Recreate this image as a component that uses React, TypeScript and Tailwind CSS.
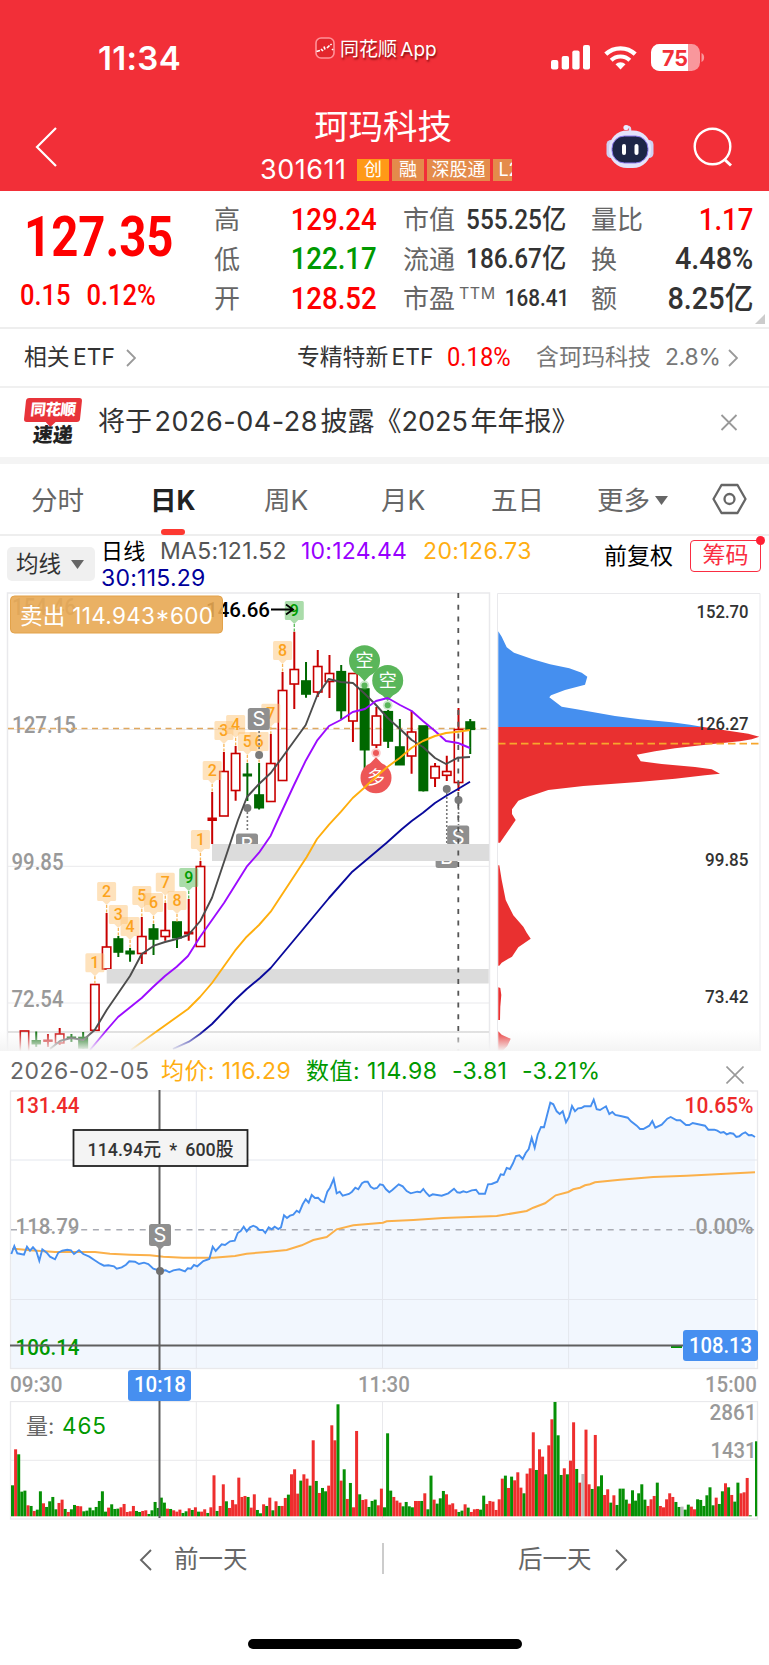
import { ReactNode } from "react";

const INTER = "font-['Inter','Noto_Sans_CJK_SC',sans-serif]";
const DIN = "font-['Roboto','Noto_Sans_CJK_SC',sans-serif] font-medium whitespace-nowrap";
const GREEN = "#009900";
const GRID = "#e9e9ec";

// series are stored at 3x, this brings them back to page pixels
function pts(list: string, ox: number, oy: number) {
    return list.trim().split(/\s+/).map((p) => {
        const [x, y] = p.split(",").map(Number);
        return (x / 3 + ox).toFixed(1) + "," + (y / 3 + oy).toFixed(1);
    }).join(" ");
}

// text in the charts: y is the baseline, w the final width
function Label(props: { x: number; y: number; w: number; size: number; fill: string; children: string; weight?: number; gap?: number }) {
    return (
        <text x={props.x} y={props.y} fontSize={props.size} fill={props.fill} fontWeight={props.weight ?? 500} wordSpacing={props.gap ?? 0}
            textLength={props.w} lengthAdjust="spacingAndGlyphs" fontFamily="Roboto, 'Noto Sans CJK SC', sans-serif">
            {props.children}
        </text>
    );
}

function StatusBar() {
    return (
        <div className="flex h-[106px] text-white">
            <div className="ml-[98px] mt-[38px] h-10 w-[217px] text-[33px] font-semibold leading-[41px] tracking-[0.300px]">11:34</div>
            <div className="flex h-6 w-[236px] pt-[37px]">
                <svg className="h-[22px] w-[20px] shrink-0" viewBox="0 0 20 22">
                    <rect x="1" y="1" width="18" height="20" rx="5" fill="#e3262d" stroke="#ff9298" strokeWidth="1.6" />
                    <path d="M1.500 14.500l3.500-1M6 12l2 2M9 9.500l1 3M12 11l2.500-2.500M15.500 7l1 1M17 12l1 1" stroke="#fff" strokeWidth="1.700" />
                </svg>
                <div className="ml-[5px] h-6 whitespace-nowrap text-[19px] leading-[25px] [word-spacing:-2px] [text-shadow:1px_2px_2px_rgba(90,0,0,0.7)]">同花顺 App</div>
            </div>
            <svg className="mt-[44px] h-7 w-[154px]" viewBox="551 44 154 28" fill="#fff">
                <rect x="551" y="60" width="7.3" height="9.5" rx="2" />
                <rect x="561.7" y="56" width="7.3" height="13.5" rx="2" />
                <rect x="572.3" y="50.5" width="7.3" height="19" rx="2" />
                <rect x="583" y="45" width="7" height="24.5" rx="2" />
                <path d="M620.5 69.5l-5-5.2a7.4 7.4 0 0 1 10 0z" />
                <path d="M611.2 60.2a13.5 13.5 0 0 1 18.6 0" fill="none" stroke="#fff" strokeWidth="4.2" />
                <path d="M605.8 54.2a21.4 21.4 0 0 1 29.4 0" fill="none" stroke="#fff" strokeWidth="4.4" />
                <rect x="651" y="44" width="49" height="27" rx="8.5" opacity="0.5" />
                <path d="M659.500 44H688v27h-28.500a8.500 8.500 0 0 1-8.500-8.500v-10a8.500 8.500 0 0 1 8.500-8.500z" />
                <path d="M701.500 53c3.500 1.500 3.500 7.500 0 9z" opacity="0.5" />
                <text x="662" y="65.500" fontSize="21.500" fontWeight="700" fill="#f22f38" textLength="26" lengthAdjust="spacingAndGlyphs">75</text>
            </svg>
        </div>
    );
}

function Tag(props: { text: string; cls: string }) {
    return <div className={"h-[22px] shrink-0 overflow-hidden whitespace-nowrap text-center text-[18px] leading-[21px] text-white " + props.cls}>{props.text}</div>;
}

function TitleBar() {
    return (
        <div className="flex h-[85px] text-white">
            <svg className="ml-[35px] mt-[21px] h-10 w-[22px]" viewBox="0 0 22 40" fill="none" stroke="#fff" strokeWidth="2.200">
                <path d="M21 1L2 20l19 19" />
            </svg>
            <div className="ml-[203px] w-[346px]">
                <div className="ml-[54px] h-[48px] text-[34.5px] leading-[42px]">珂玛科技</div>
                <div className="flex h-[32px] w-[252px] items-center gap-[3px] overflow-hidden">
                    <div className="w-[94px] shrink-0 text-[27px] leading-8 tracking-[0.500px]">301611</div>
                    <Tag text="创" cls="w-8 bg-[#ff9a17]" />
                    <Tag text="融" cls="w-8 bg-[#e48b4b]" />
                    <Tag text="深股通" cls="w-[63px] bg-[#e48b4b]" />
                    <Tag text="L2" cls="w-[32px] bg-[#e48b4b]" />
                </div>
            </div>
            <svg className="mt-[18px] h-[46px] w-[48px]" viewBox="606 124 48 46">
                <path d="M630 133v-4q0-3-4-2" stroke="#d9dcf5" strokeWidth="2.500" fill="none" />
                <circle cx="626" cy="127.500" r="2.600" fill="#e9ecff" />
                <rect x="606.500" y="140" width="9" height="18" rx="4.500" fill="#cfd0f2" />
                <rect x="644.500" y="140" width="9" height="18" rx="4.500" fill="#cfd0f2" />
                <rect x="609" y="130.500" width="42" height="37.500" rx="18" fill="#e4e4fb" />
                <rect x="612" y="136" width="36" height="27" rx="12.500" fill="#1d2546" stroke="#8f7cf0" strokeWidth="1" />
                <rect x="622" y="144" width="4" height="11" rx="2" fill="#fff" />
                <rect x="634.500" y="144" width="4" height="11" rx="2" fill="#fff" />
            </svg>
            <svg className="ml-[39px] mt-[21px] h-10 w-[42px]" viewBox="0 0 42 40" fill="none" stroke="#fff" strokeWidth="2.400">
                <circle cx="19.500" cy="19.500" r="17.800" />
                <path d="M31 32l7 6.500" strokeWidth="3" />
            </svg>
        </div>
    );
}

function QuoteCell(props: { name: ReactNode; value: string; cls: string }) {
    return (
        <div className="flex h-[39.500px] items-center justify-between">
            <span className="whitespace-nowrap text-[26px] text-[#666]">{props.name}</span>
            <span className={DIN + " origin-right " + props.cls}>{props.value}</span>
        </div>
    );
}

function Quote() {
    const big = "text-[31px] ";
    return (
        <div className="relative flex h-[138px] border-b-2 border-[#eee] pt-[9px]">
            <div className="w-[214px] text-[#fe0000]">
                <div className={DIN + " ml-6 mt-[4px] h-[64px] origin-left scale-x-[0.845] !font-bold text-[56px] leading-[66px]"}>127.35</div>
                <div className={DIN + " ml-5 mt-[7px] flex origin-left scale-x-[0.880] gap-[18px] text-[29px] leading-10"}><span>0.15</span><span>0.12%</span></div>
            </div>
            <div className="w-[163px]">
                <QuoteCell name="高" value="129.24" cls={big + "scale-x-[0.890] text-[#fe0000]"} />
                <QuoteCell name="低" value="122.17" cls={big + "scale-x-[0.890] text-[#009900]"} />
                <QuoteCell name="开" value="128.52" cls={big + "scale-x-[0.890] text-[#fe0000]"} />
            </div>
            <div className="ml-[26px] w-[162px]">
                <QuoteCell name="市值" value="555.25亿" cls="text-[27px] scale-x-[0.900] text-[#333]" />
                <QuoteCell name="流通" value="186.67亿" cls="text-[27px] scale-x-[0.900] text-[#333]" />
                <QuoteCell name={<>市盈<sup className="top-[-9px] ml-1 text-[16px] tracking-[0.500px]">TTM</sup></>} value="168.41" cls="text-[23.500px] scale-x-[0.880] text-[#333]" />
            </div>
            <div className="ml-[26px] w-[162px]">
                <QuoteCell name="量比" value="1.17" cls={big + "scale-x-[0.890] text-[#fe0000]"} />
                <QuoteCell name="换" value="4.48%" cls={big + "scale-x-[0.930] text-[#333]"} />
                <QuoteCell name="额" value="8.25亿" cls={big + "scale-x-[0.930] text-[#333]"} />
            </div>
            <svg className="absolute bottom-[3px] right-[4px] h-[10px] w-[10px]" viewBox="0 0 10 10"><path d="M10 0v10H0z" fill="#ccc" /></svg>
        </div>
    );
}

function Chevron(props: { cls: string }) {
    return <svg className={"h-[18px] w-[10px] shrink-0 " + props.cls} viewBox="0 0 10 18" fill="none" stroke="#999" strokeWidth="1.800"><path d="M1 1l8 8-8 8" /></svg>;
}

function EtfRow() {
    return (
        <div className="flex h-[59px] items-center whitespace-nowrap border-b-2 border-[#f0f0f0] text-[22.800px] text-[#333] [word-spacing:-3px]">
            <span className="ml-6 w-[102px]">相关 ETF</span>
            <Chevron cls="" />
            <span className="ml-[161px] w-[150px]">专精特新 ETF</span>
            <span className={DIN + " w-[89px] origin-left scale-x-[0.950] text-[25px] text-[#fe0000] !font-normal"}>0.18%</span>
            <span className="w-[129px] text-[23px] text-[#777]">含珂玛科技</span>
            <span className="w-[63px] tracking-[-0.200px] text-[#777]">2.8%</span>
            <Chevron cls="" />
        </div>
    );
}

function Notice() {
    return (
        <div className="flex h-[76px] border-b-[7px] border-[#f4f4f4]">
            <div className="ml-[23px] mt-[10px] w-[60px]">
                <div className="relative ml-[2px] h-[24px] w-[56px] -skew-x-6 rounded-[3px] bg-[#e8343a] text-center">
                    <span className="block whitespace-nowrap text-[15.500px] font-black leading-[23px] tracking-[-0.500px] text-white">同花顺</span>
                    <svg className="absolute left-[22px] top-6 h-[5px] w-[10px]" viewBox="0 0 10 5"><path d="M0 0h10L5 5z" fill="#e8343a" /></svg>
                </div>
                <div className="-skew-x-6 text-center text-[20px] font-black leading-[27px] text-[#222]">速递</div>
            </div>
            <div className="ml-[15px] w-[622px] whitespace-nowrap pt-[14px] text-[27px] leading-10 text-[#333] [word-spacing:-5px]">
                将于 <span className="tracking-[0.500px]">2026-04-28</span> 披露《2025 年年报》
            </div>
            <svg className="mt-[26px] h-[17px] w-[18px]" viewBox="0 0 18 17" stroke="#999" strokeWidth="1.800"><path d="M1.500 1l15 15M16.500 1l-15 15" /></svg>
        </div>
    );
}

function Tabs() {
    const tab = "h-[72px] shrink-0 whitespace-nowrap leading-[73px] ";
    return (
        <div className="relative flex h-[72px] border-b-2 border-[#eee] pl-[31px] text-[26.500px] text-[#666]">
            <div className={tab + "w-[119px]"}>分时</div>
            <div className={tab + "w-[114px] font-bold text-[#222]"}>日K</div>
            <div className={tab + "w-[117px]"}>周K</div>
            <div className={tab + "w-[110px]"}>月K</div>
            <div className={tab + "w-[106px]"}>五日</div>
            <div className={tab + "w-[58px]"}>更多</div>
            <svg className="mt-8 h-[9px] w-[13px]" viewBox="0 0 13 9"><path d="M0 0h13L6.500 9z" fill="#666" /></svg>
            <svg className="ml-[44px] mt-[19px] h-[32px] w-[35px]" viewBox="0 0 35 32" fill="none" stroke="#666" strokeWidth="2.300">
                <path d="M9.500 2h16L33.500 16l-8 14h-16L1.500 16z" strokeLinejoin="round" />
                <circle cx="17.500" cy="16" r="5" />
            </svg>
            <div className="absolute bottom-[-1px] left-[161px] h-[6px] w-[24px] rounded-[3px] bg-[#fd3931]"></div>
        </div>
    );
}

function MaRow() {
    return (
        <div className="flex h-[56px]">
            <div className="ml-[7px] mt-[11px] flex h-[34px] w-[88px] items-center rounded-[5px] bg-[#f0f0f0] pl-[9px]">
                <span className="w-[55px] text-[22.500px] text-[#333]">均线</span>
                <svg className="h-[9px] w-[13px]" viewBox="0 0 13 9"><path d="M0 0h13L6.500 9z" fill="#666" /></svg>
            </div>
            <div className="ml-[6px] w-[500px] whitespace-nowrap pt-[1px] text-[23px] leading-[28px] tracking-[0.250px]">
                <div className="flex h-[27px]">
                    <span className="w-[59px] text-[22px] text-black">日线</span>
                    <span className="w-[141px] text-[#555]">MA5:121.52</span>
                    <span className="w-[122px] text-[#9800ff]">10:124.44</span>
                    <span className="tracking-[0.400px] text-[#ffae12]">20:126.73</span>
                </div>
                <div className="text-[#00009b]">30:115.29</div>
            </div>
            <div className="ml-[3px] mt-[3px] w-[86px] whitespace-nowrap text-[23px] leading-[34px] text-black">前复权</div>
            <div className="relative mt-[4px] h-[32px] w-[71px] rounded-[4px] border-[1.500px] border-[#fa2d42] text-center text-[23px] leading-[29px] text-[#fa2d42]">
                筹码
                <i className="absolute right-[-5px] top-[-5px] h-[9px] w-[9px] rounded-full bg-[#ff1f33]"></i>
            </div>
        </div>
    );
}

// r = up, g = down; body top, body bottom, high, low
const candles: [string, number, number, number, number][] = [
    ["r", 1031, 1056, 1031, 1056], ["g", 1040.5, 1044, 1031.5, 1047], ["r", 1040, 1041.5, 1034, 1047], ["r", 1034, 1043, 1028, 1045],
    ["g", 1037, 1038.5, 1034, 1042], ["g", 1037.5, 1048, 1032, 1049], ["r", 984.5, 1030.3, 984.5, 1030.3], ["r", 947, 969, 913, 969],
    ["g", 939, 952, 936, 957], ["g", 951, 954, 948, 961.7], ["r", 936.5, 953.5, 917, 964], ["g", 929, 939, 924, 955],
    ["r", 930.5, 936.5, 903, 940.7], ["g", 922, 937.7, 922, 948], ["r", 932, 934, 899, 940.7], ["r", 866.5, 946.5, 861, 946.5],
    ["r", 818, 820.5, 792, 844], ["r", 771.5, 816, 752, 816], ["r", 753.5, 790.5, 746, 800.7], ["g", 774, 776, 763, 801],
    ["g", 795, 807.7, 763, 809.5], ["r", 763.5, 801.5, 734, 801.5], ["r", 690.5, 780.5, 672, 780.5], ["r", 669.5, 684, 631.7, 709],
    ["g", 681, 694, 662, 697.7], ["r", 666.5, 692, 650, 697], ["r", 673.5, 681.5, 655, 698], ["g", 671.7, 710.5, 665, 719],
    ["r", 673.5, 721, 673, 742], ["g", 689, 749.7, 689, 770], ["r", 716, 745, 707, 748], ["g", 711.7, 741, 710, 748],
    ["g", 747, 764.7, 719, 765], ["r", 732, 756, 710.7, 773.7], ["g", 726, 790.5, 726, 791.5], ["r", 766.5, 778, 763, 787],
    ["r", 771.5, 775.3, 755.7, 781], ["r", 729.5, 782.5, 708, 791], ["g", 722, 729.3, 719, 754],
];
const cx = (i: number) => 24.5 + i * 11.73;

// candle index, flag top, number
const flags: [number, number, number][] = [
    [6, 953.3, 1], [7, 882, 2], [8, 905, 3], [9, 917, 4], [10, 886, 5], [11, 893, 6], [12, 872.7, 7], [13, 891, 8], [14, 868, 9],
    [15, 830, 1], [16, 761, 2], [17, 721, 3], [18, 715, 4], [19, 732, 5], [20, 732, 6], [21, 703.7, 7], [22, 641, 8], [23, 601, 9],
];

function Marker(props: { x: number; y: number; t: string }) {
    const { x, y, t } = props;
    return (
        <g>
            <rect x={x - 11} y={y} width="22" height="22" rx="2.500" fill="#8f8f8f" />
            <text x={x} y={y + 18} fontSize="20" fill="#fff" textAnchor="middle">{t}</text>
        </g>
    );
}

function Bubble(props: { x: number; y: number; t: string; c: string; up?: boolean }) {
    const { x, y, t, c } = props;
    const d = props.up ? -1 : 1;
    return (
        <g fill={c}>
            <circle cx={x} cy={y} r="15.500" />
            <path d={`M${x - 8} ${y + 12 * d}L${x} ${y + 20.500 * d}L${x + 8} ${y + 12 * d}z`} />
            <circle cx={x} cy={y + 24.700 * d} r="4.800" opacity="0.3" />
            <circle cx={x} cy={y + 24.700 * d} r="3" />
            <text x={x} y={y + 6.500} fontSize="18" fill="#fff" textAnchor="middle">{t}</text>
        </g>
    );
}

function Stem(props: { i: number; y1: number; y2: number; dot: number }) {
    return (
        <g>
            <line x1={cx(props.i)} x2={cx(props.i)} y1={props.y1} y2={props.y2} stroke="#777" strokeWidth="1.600" strokeDasharray="2 2" />
            <circle cx={cx(props.i)} cy={props.dot} r="4" fill="#7a7a7a" />
        </g>
    );
}

function KLine() {
    return (
        <svg className="block h-[459px] w-full" viewBox="0 592 769 459" fontFamily="Inter, 'Noto Sans CJK SC', sans-serif">
            <defs>
                <linearGradient id="fade" x1="0" y1="0" x2="0" y2="1">
                    <stop offset="0" stopColor="#f6f6f6" stopOpacity="0" />
                    <stop offset="1" stopColor="#f4f4f4" stopOpacity="1" />
                </linearGradient>
            </defs>
            <g fill="none" stroke={GRID} strokeWidth="1.500">
                <path d="M7.500 1051V593H489.500V1051" />
                <path d="M8 729.500H489M8 866.300H489M8 1003H489" strokeWidth="1" />
                <path d="M8 1032H489" stroke="#d4d4d4" />
                <path d="M497.500 1051V593.500H760V1051" strokeWidth="1" />
            </g>
            <Label x={12} y={615} w={64} size={23} fill="#999">154.46</Label>
            <Label x={12} y={733} w={64} size={23} fill="#999">127.15</Label>
            <Label x={11.5} y={869.5} w={52} size={23} fill="#999">99.85</Label>
            <Label x={11.5} y={1006.5} w={52} size={23} fill="#999">72.54</Label>
            <path d="M8 728.500H489" stroke="#dfa860" strokeWidth="1.300" strokeDasharray="6 4.500" />
            <Label x={206} y={617} w={64} size={20.5} fill="#000">146.66</Label>

            {candles.map(([c, t, b, h, l], i) => {
                const col = c === "r" ? "#c80000" : "#006800";
                const x = cx(i);
                const hollow = c === "r" && b - t > 3;
                return (
                    <g key={i} stroke={col} strokeWidth="2">
                        <path d={`M${x} ${h}V${t}M${x} ${b}V${l}`} />
                        <rect x={x - 4.2} y={t} width="8.400" height={b - t} fill={hollow ? "none" : col} strokeWidth={b - t < 4 && !hollow ? 1 : 1.6} />
                    </g>
                );
            })}

            {flags.map(([i, y, n], k) => {
                const x = cx(i);
                const g = n === 9;
                return (
                    <g key={k}>
                        <path d={`M${x - 8} ${y}h16a1.500 1.500 0 0 1 1.500 1.500v16a1.500 1.500 0 0 1-1.500 1.500h-4l-4 4-4-4h-4a1.500 1.500 0 0 1-1.500-1.500v-16a1.500 1.500 0 0 1 1.500-1.500z`} fill={g ? "#56b95680" : "#fec57a80"} />
                        <line x1={x} x2={x} y1={y + 23} y2={candles[i][3]} stroke={g ? "#56b956" : "#f7b557"} strokeWidth="1.300" strokeDasharray="3 1.500" />
                        <text x={x} y={y + 15} fontSize="16" fontWeight="500" fontFamily="Roboto" textAnchor="middle" fill={g ? "#009c00" : "#fca31c"}>{n}</text>
                    </g>
                );
            })}
            <path d="M271 609.500H293M286 604.500L293 609.500L286 614.500" stroke="#000" strokeWidth="1.800" fill="none" />

            <Marker x={258.8} y={708} t="S" />
            <Stem i={20} y1={731} y2={755} dot={755} />
            <Marker x={247} y={833.5} t="B" />
            <Stem i={19} y1={808} y2={832} dot={808} />
            <Stem i={36} y1={789} y2={845} dot={789} />
            <Marker x={446.6} y={846} t="B" />
            <Stem i={37} y1={800} y2={825} dot={800} />
            <Marker x={458.2} y={825.5} t="S" />
            <rect x="212" y="844" width="277" height="17" fill="#dcdcdc" />
            <rect x="106.700" y="969" width="382" height="14.500" fill="#dcdcdc" />

            <Bubble x={364.5} y={660.7} t="空" c="#5ab65a" />
            <Bubble x={387.7} y={680.5} t="空" c="#5ab65a" />
            <Bubble x={376} y={777.7} t="多" c="#ed5757" up />

            <g fill="none" strokeWidth="1.900" strokeLinejoin="round">
                <polyline stroke="#4c4c4c" points="50,1049 60,1041 71,1038 83.3,1040 94.7,1030 106.7,1010 130,976 141.7,954 154,945.7 165,942 176.7,939 188.3,935 200.3,921 212,897.7 224,862 238,820 247,797 259,784 270.7,773 282,757.7 305.7,725 317,696 328.7,679 340.7,682 353,683 365,694 376,705 387.7,718 400,729 411.7,740 423,747 435,758 446,764 458,757.7 470,757" />
                <polyline stroke="#9c0bff" points="90,1050 106.7,1030 118,1017 141.7,998 153,987 165,976 176.7,966.7 188,956 200,937 224,903 246.7,866.7 259,852.7 270.7,835.7 278.7,818 294,785 305.7,760.7 317,740.7 329,726 340.7,720 352.7,712 365,709 376,701 387.7,698 400,705 411.7,711 423,721 435,731 446,741 458,743 470,748" />
                <polyline stroke="#ffae0d" points="131,1050 153,1034 188,1009 200,997 212,983 235,950.7 246.7,936.7 259,925 270.7,911.7 306.7,857 317,839 329,824.7 341,811.7 352.7,798 364,788 376,776.7 387.7,766.7 400,757.7 411.7,747.7 423,741 435,736 446,733 458,731.7 470,730" />
                <polyline stroke="#0a0a9c" points="173,1049 189,1041.7 200,1034 212,1024 235,1000 246.7,989 260,978 270.7,968 305.7,926 329,898 352.3,871.7 386.7,842.7 402,829 411.7,821 423,812.7 435,803 446,796 458,789 470,781.7" />
            </g>
            <path d="M458.300 593V1051" stroke="#555" strokeWidth="1.800" strokeDasharray="5 6.700" />

            <rect x="10.500" y="596" width="212" height="37" rx="4" fill="#e8a953" fillOpacity="0.9" stroke="#e3a24a" />
            <text x="20" y="623.500" fontSize="22.500" fill="#fff" textLength="193">卖出 114.943*600</text>

            <polygon fill="#458fef" points={pts("25,124 35,140 50,172 72,188 128,208 180,223 238,235 275,248 292,260 285,284 225,300 183,316 178,322 215,350 260,358 375,378 450,388 545,397 600,404 640,411 25,411", 490, 590)} />
            <g fill="#e93030">
                <polygon points={pts("25,411 640,411 715,422 775,431 808,440 785,448 750,454 660,463 555,475 495,484 440,494 452,514 515,522 615,531 665,538 690,551 645,556 555,566 445,576 280,588 175,600 115,620 85,632 66,658 66,672 77,690 30,758 25,758", 490, 590)} />
                <polygon points={pts("25,826 28,826 35,870 47,930 70,976 100,1010 110,1028 122,1046 85,1072 66,1100 35,1118 28,1127 25,1127", 490, 590)} />
                <polygon points={pts("25,1192 31,1194 34,1215 31,1250 30,1290 25,1290", 490, 590)} />
                <polygon points={pts("25,1324 35,1334 62,1346 52,1368 38,1382 25,1382", 490, 590)} />
            </g>
            <path d="M498 743.700H759" stroke="#f7a62c" strokeWidth="1.800" strokeDasharray="7.500 4" />
            <Label x={696.5} y={618} w={52} size={18.5} fill="#333">152.70</Label>
            <Label x={696.5} y={729.5} w={52} size={18.5} fill="#333">126.27</Label>
            <Label x={705} y={866} w={43.5} size={18.5} fill="#333">99.85</Label>
            <Label x={705} y={1003} w={43.5} size={18.5} fill="#333">73.42</Label>
            <rect x="0" y="1030" width="760" height="21" fill="url(#fade)" />
        </svg>
    );
}

const priceLeft = "34,612 43,588 52,610 72,614 81,590 90,602 99,592 109,603 118,632 127,598 140,608 150,620 165,628 175,608 187,602 202,599 213,601 222,612 237,601 250,612 268,620 283,630 300,641 312,647 325,646 342,649 350,656 365,652 378,644 388,634 405,635 417,642 432,638 445,642 460,656 479,662 497,661 508,667 520,661 538,658 555,664 563,655 573,656 582,645 592,649 610,633 628,627 638,590 647,603 665,583 675,585 690,574 704,572 713,549 722,543 731,530 740,544 750,532 760,527 770,532 778,540 788,540 796,549 806,532 815,538 824,530 835,537 843,532 852,496 861,504 870,497 880,494 890,482 898,487 908,463 917,448 926,458 935,435 945,444 954,443 963,453 972,457 982,425 990,413 1001,387 1010,430 1019,425 1028,437 1047,432 1056,425 1066,413 1075,418 1086,400 1094,395 1103,395 1112,410 1122,416 1131,414";
const priceRight = "0,403 9,405 18,418 28,427 37,420 56,403 68,409 80,423 92,430 112,425 121,427 130,417 139,429 148,438 158,433 185,437 205,430 222,416 232,427 240,428 250,424 260,427 275,421 288,419 297,431 315,431 324,403 335,402 352,395 362,373 371,375 380,354 390,357 399,340 408,318 418,316 428,327 437,309 446,297 455,263 464,293 473,254 483,231 492,232 502,193 511,158 520,163 530,184 539,192 548,184 558,217 567,201 576,168 585,184 594,175 604,174 613,169 632,169 641,149 650,178 660,180 678,169 688,192 697,186 706,195 725,199 743,203 753,214 770,227 780,237 790,237 808,227 817,213 826,233 845,224 862,206 872,201 890,211 901,211 918,225 928,225 938,219 975,227 985,239 1003,239 1012,242 1022,248 1031,246 1040,253 1050,249 1060,251 1069,261 1078,259 1087,251 1096,247 1106,256 1115,255 1125,261";
const avgLeft = "36,597 50,597 90,601 165,606 285,606 330,611 390,614 450,616 490,620 550,623 640,623 705,618 740,611 800,606 860,600 905,586 940,570 980,561 1010,538 1060,526 1140,519";
const avgRight = "9,518 20,514 100,510 190,504 350,498 440,483 460,473 495,460 527,436 565,426 580,418 600,413 615,406 630,403 645,397 720,389 820,381 920,377 1125,367";

function Intraday() {
    const price = pts(priceLeft, 0, 1050) + " " + pts(priceRight, 380, 1050);
    const avg = pts(avgLeft, 0, 1050) + " " + pts(avgRight, 380, 1050);
    return (
        <svg className="block h-[280px] w-full" viewBox="0 1090 769 280" fontFamily="Inter, 'Noto Sans CJK SC', sans-serif">
            <polygon points={"11,1368 " + price + " 755,1368"} fill="#f2f7fe" />
            <g fill="none" stroke={GRID} strokeWidth="1.300">
                <rect x="10.500" y="1091" width="747" height="277.500" />
                <path d="M196.300 1091V1368M382.500 1091V1368M568.600 1091V1368M11 1160H757M11 1299.500H757" stroke="#e4e7ee" strokeWidth="1" />
            </g>
            <path d="M11 1229.700H755" stroke="#a9abb3" strokeWidth="1.500" strokeDasharray="6 5.700" />
            <polyline points={avg} fill="none" stroke="#fbb04a" strokeWidth="2" />
            <polyline points={price} fill="none" stroke="#468ff0" strokeWidth="1.900" />
            <Label x={15.5} y={1113} w={64} size={22.5} fill="#ee2a2a">131.44</Label>
            <Label x={15.5} y={1234} w={64} size={22.5} fill="#999">118.79</Label>
            <Label x={15.5} y={1354.5} w={64} size={22.5} fill={GREEN}>106.14</Label>
            <Label x={684.5} y={1113} w={69} size={22.5} fill="#ee2a2a">10.65%</Label>
            <Label x={695.5} y={1234} w={58} size={22.5} fill="#999">0.00%</Label>
            <path d="M671 1347H682" stroke={GREEN} strokeWidth="2" />
            <path d="M10 1345.500H684M159.500 1090V1370" stroke="#5f5f5f" strokeWidth="2" fill="none" />
            <Marker x={160} y={1224} t="S" />
            <path d="M155 1245h10l-5 5z" fill="#8f8f8f" />
            <circle cx="160" cy="1271" r="4" fill="#707070" />
            <rect x="73.500" y="1130" width="174" height="36" fill="#f4f4f4" stroke="#222" strokeWidth="1.800" />
            <Label x={87.5} y={1155.5} w={146} size={19} fill="#333" gap={4}>114.94元 * 600股</Label>
            <rect x="683" y="1330" width="75" height="31" rx="3" fill="#468ff0" />
            <Label x={689} y={1353} w={63} size={22} fill="#fff">108.13</Label>
        </svg>
    );
}

function TimeAxis() {
    return (
        <div className={DIN + " relative flex h-[31px] justify-between pl-[10px] pr-[12px] text-[22px] leading-[30px] text-[#999]"}>
            <span className="origin-left scale-x-[0.940]">09:30</span>
            <span className="scale-x-[0.930]">11:30</span>
            <span className="origin-right scale-x-[0.930]">15:00</span>
            <div className="absolute left-[128px] top-0 h-[31px] w-[63px] rounded-[3px] bg-[#468ff0] text-center text-white"><span className="inline-block scale-x-[0.930]">10:18</span></div>
        </div>
    );
}

// one entry a minute: colour and bar top, at 3x
const volume = "g316 r208 g223 g335 g332 r376 g378 r393 g389 g334 r370 g381 g364 g351 g388 r369 r359 g387 r396 g388 g375 r378 r379 g394 g392 g383 g391 g381 g363 g334 g395 r383 g373 g387 g386 r382 r372 r396 r394 r378 g393 g396 r393 r391 g402 g391 g366 g384 g353 g368 r386 g387 r391 r395 r389 g399 g394 r385 g390 r382 g395 r395 r388 g399 r382 r286 g393 r378 r313 g364 r384 r360 r373 r293 r351 r348 g351 r383 r343 g390 g400 r373 g378 r353 g391 r364 g378 r378 r354 g344 r283 r268 r341 g302 r283 r296 g317 r181 g303 r339 g324 g334 r317 r136 r181 g73 r302 g268 r357 g309 r382 r153 g343 r360 r358 g381 g363 g359 r376 r326 g382 g160 g332 r351 r362 r368 g379 g366 g379 g382 r363 r363 g363 r340 g388 g287 r359 g371 g355 g333 r343 r374 r370 r388 g396 g392 r373 g383 r396 r388 r387 g389 g347 r372 r363 r365 r390 r358 r296 g287 r324 g290 r301 r277 r323 g340 r281 r265 r157 g270 r208 r230 g283 r196 r118 g66 g166 g285 r265 g283 r242 r127 g267 r308 n282 r149 r313 g327 r165 g319 g286 r345 r328 g368 r346 g375 g326 g326 g359 r371 g331 g362 g340 g313 g359 r378 r358 r348 g308 r378 r382 r358 r340 r351 g366 g381 n380 g389 g374 r380 r388 g358 g360 g378 g346 g322 g376 r353 g372 g334 r310 g322 r345 g365 g308 r340 r337 r294 g406 g409 g184".split(" ");
const volumeColor: Record<string, string> = { r: "#ee2e2e", g: "#069006", n: "#b9b9b9" };

function Volume() {
    return (
        <svg className="block h-[119px] w-full" viewBox="0 1401 769 119" fontFamily="Inter, 'Noto Sans CJK SC', sans-serif">
            <g fill="none" stroke={GRID} strokeWidth="1.300">
                <rect x="10.500" y="1401.500" width="747" height="117.500" />
                <path d="M196.300 1401V1519M382.500 1401V1519M568.600 1401V1519M11 1460.300H757" strokeWidth="1" />
            </g>
            <Label x={709.5} y={1420} w={47} size={22} fill="#999">2861</Label>
            <Label x={710.5} y={1458} w={46} size={22} fill="#999">1431</Label>
            {volume.map((v, i) => {
                const h = (409 - Number(v.slice(1))) / 3;
                return <rect key={i} x={11 + i * 3.1} y={1516.3 - h} width={i === 240 ? 2.2 : 3} height={h} fill={volumeColor[v[0]]} />;
            })}
            <path d="M159.500 1401V1518" stroke="#5f5f5f" strokeWidth="2" />
            <text x="26" y="1434" fontSize="22" fill="#666">量:</text>
            <text x="62" y="1434" fontSize="22.500" fill={GREEN} textLength="44">465</text>
        </svg>
    );
}

function DayInfo() {
    return (
        <div className="flex h-[39px] whitespace-nowrap pl-[10px] text-[23px] leading-[41px] tracking-[0.300px] text-[#009900]">
            <span className="w-[151px] tracking-[0.450px] text-[#666]">2026-02-05</span>
            <span className="w-[145px] tracking-[0.400px] text-[#ffae12]">均价: 116.29</span>
            <span className="w-[146px] tracking-[0.450px]">数值: 114.98</span>
            <span className="w-[70px]">-3.81</span>
            <span className="w-[204px]">-3.21%</span>
            <svg className="mt-[15px] h-[18px] w-[18px]" viewBox="0 0 18 18" stroke="#999" strokeWidth="1.600"><path d="M.5 .5l17 17M17.500 .5l-17 17" /></svg>
        </div>
    );
}

function DayNav() {
    return (
        <div className="flex h-[119px] items-start pt-[23px] text-[24.500px] leading-[33px] text-[#666]">
            <svg className="ml-[139px] mt-[6px] h-[22px] w-[13px]" viewBox="0 0 13 22" fill="none" stroke="#666" strokeWidth="1.900"><path d="M12 1L2 11l10 10" /></svg>
            <span className="ml-[22px] w-[208px]">前一天</span>
            <i className="h-[31px] w-[2px] bg-[#ccc]"></i>
            <span className="ml-[134px] w-[97px]">后一天</span>
            <svg className="mt-[6px] h-[22px] w-[13px]" viewBox="0 0 13 22" fill="none" stroke="#666" strokeWidth="1.900"><path d="M1 1l10 10L1 21" /></svg>
        </div>
    );
}

export default function App() {
    return (
        <div className={"h-[1665px] w-[769px] overflow-hidden bg-white " + INTER}>
            <div className="h-[191px] bg-[#f22f38]">
                <StatusBar />
                <TitleBar />
            </div>
            <Quote />
            <EtfRow />
            <Notice />
            <Tabs />
            <MaRow />
            <KLine />
            <DayInfo />
            <Intraday />
            <TimeAxis />
            <Volume />
            <DayNav />
            <div className="mx-auto h-[10px] w-[274px] rounded-full bg-black"></div>
        </div>
    );
}
